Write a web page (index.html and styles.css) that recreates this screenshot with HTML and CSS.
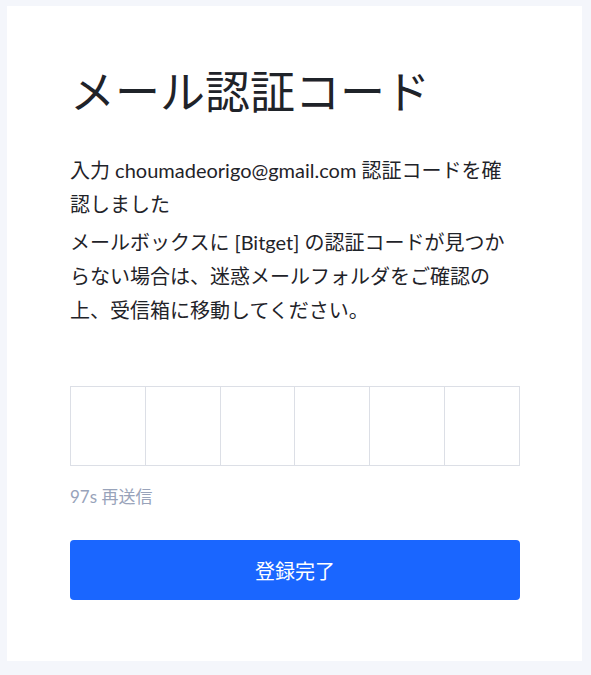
FILE: index.html
```html
<!DOCTYPE html>
<html>
<head>
  <title>メール認証コード</title>
  <link rel="stylesheet" href="styles.css">
</head>
<body>
  <div class="card">
    <h1 class="title">メール認証コード</h1>
    <p class="desc">入力 choumadeorigo@gmail.com 認証コードを確認しました</p>
    <p class="desc desc-second">メールボックスに [Bitget] の認証コードが見つからない場合は、迷惑メールフォルダをご確認の上、受信箱に移動してください。</p>

    <div class="code-boxes">
      <input class="code-cell" maxlength="1">
      <input class="code-cell" maxlength="1">
      <input class="code-cell" maxlength="1">
      <input class="code-cell" maxlength="1">
      <input class="code-cell" maxlength="1">
      <input class="code-cell" maxlength="1">
    </div>

    <div class="resend">97s 再送信</div>

    <button class="submit">登録完了</button>
  </div>
</body>
</html>
```

FILE: styles.css
```css
body {
  margin: 0;
  padding: 6px 9px 14px 7px;
  background-color: #f4f6fb;
  font-family: Lato, "Noto Sans CJK JP", sans-serif;
  color: #1f2329;
}

.card {
  background-color: #fff;
  padding: 60px 62px 61px 63px;
}

.title {
  margin: 0;
  font-size: 45px;
  font-weight: 400;
  line-height: 53px;
}

.desc {
  margin: 34px 0 0;
  font-size: 20px;
  line-height: 34px;
}

.desc-second {
  margin-top: 4px;
}

.code-boxes {
  display: flex;
  margin-top: 59px;
  height: 80px;
  border: 1px solid #dcdfe6;
  box-sizing: border-box;
}

.code-cell {
  flex: 1;
  min-width: 0;
  border: none;
  border-right: 1px solid #dcdfe6;
  padding: 0;
  font-size: 28px;
  text-align: center;
  outline: none;
}

.code-cell:last-child {
  border-right: none;
}

.resend {
  margin-top: 19px;
  font-size: 17px;
  line-height: 24px;
  color: #98a3ba;
}

.submit {
  display: block;
  width: 100%;
  height: 60px;
  margin-top: 31px;
  background-color: #1a66ff;
  color: #fff;
  border: none;
  border-radius: 4px;
  font-family: "Noto Sans CJK JP", sans-serif;
  font-size: 20px;
  cursor: pointer;
}
```
